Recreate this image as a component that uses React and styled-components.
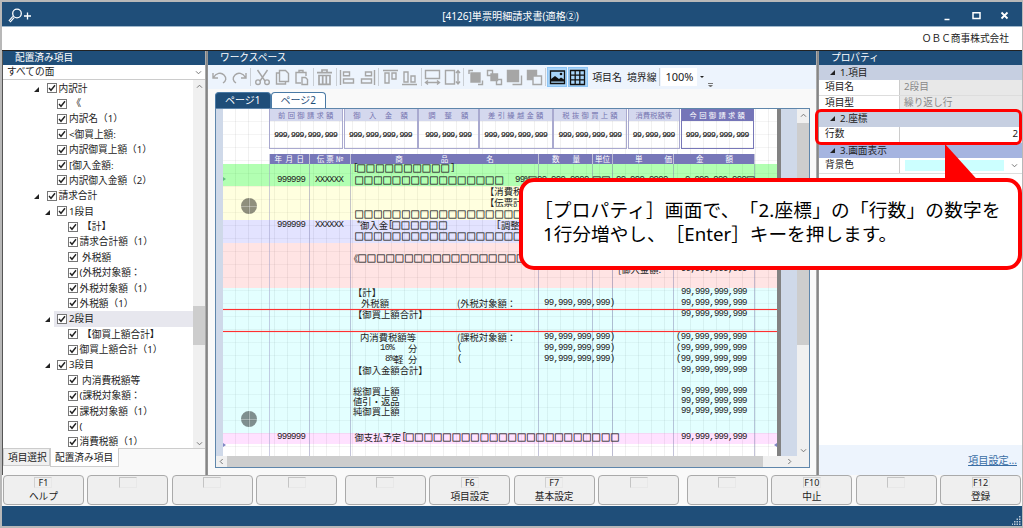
import React from "react";
import styled, { createGlobalStyle, css } from "styled-components";

const NAVY = "#1f4e79";

const treeItems = [
  { level: 1, label: "内訳計", open: true },
  { level: 2, label: " 《" },
  { level: 2, label: "内訳名（1）" },
  { level: 2, label: "<御買上額:" },
  { level: 2, label: "内訳御買上額（1）" },
  { level: 2, label: "[御入金額:" },
  { level: 2, label: "内訳御入金額（2）" },
  { level: 1, label: "請求合計", open: true },
  { level: 2, label: "1段目", open: true },
  { level: 3, label: " 【計】" },
  { level: 3, label: "請求合計額（1）" },
  { level: 3, label: " 外税額" },
  { level: 3, label: "(外税対象額：" },
  { level: 3, label: "外税対象額（1）" },
  { level: 3, label: "外税額（1）" },
  { level: 2, label: "2段目", open: true, selected: true },
  { level: 3, label: " 【御買上額合計】" },
  { level: 3, label: "御買上額合計（1）" },
  { level: 2, label: "3段目", open: true },
  { level: 3, label: " 内消費税額等" },
  { level: 3, label: "(課税対象額：" },
  { level: 3, label: "課税対象額（1）" },
  { level: 3, label: "(" },
  { level: 3, label: "消費税額（1）" },
];

const functionGroups = [
  [{ k: "F1", label: "ヘルプ" }, {}, {}, {}],
  [{}, { k: "F6", label: "項目設定" }, { k: "F7", label: "基本設定" }, {}],
  [{}, { k: "F10", label: "中止" }, {}, { k: "F12", label: "登録" }],
];

const summaryCells = [
  { label: "前回御請求額", value: "999,999,999,999", w: 75, s: 2.3 },
  { label: "御入金額", value: "999,999,999,999", w: 74.5, s: 8.5 },
  { label: "調整額", value: "999,999,999", w: 61, s: 9 },
  { label: "差引繰越金額", value: "999,999,999,999", w: 74, s: 2.3 },
  { label: "税抜御買上額", value: "999,999,999,999", w: 74.5, s: 2.3 },
  { label: "消費税額等", value: "99,999,999", w: 53, s: 0 },
  { label: "今回御請求額", value: "999,999,999,999", w: 74, s: 2.3, dark: true },
];

const columns = [
  { label: "年月日", w: 40.5, s: 3.5 },
  { label: "伝票№", w: 41, s: 2 },
  { label: "商品名", w: 188, s: 38 },
  { label: "数量", w: 54, s: 13 },
  { label: "単位", w: 20, s: 0 },
  { label: "単価", w: 61, s: 22 },
  { label: "金額", w: 81, s: 22 },
];

const bands = [
  { h: 55, color: "transparent" },
  { h: 22, color: "#00ff004d" },
  { h: 34, color: "#ffff0020" },
  { h: 22.5, color: "#0000ff1c" },
  { h: 45, color: "#ff00001b" },
  { h: 145, color: "#00ffff1c" },
  { h: 11, color: "#ff00ff1e" },
];

const boxes = (n) => "□".repeat(n);
const amount = "99,999,999,999";

// x is the left edge and y the middle line, both measured from the paper corner
const fields = [
  { x: 130, y: 59, text: `[`, mono: true },
  { x: 133.5, y: 59, text: boxes(10), box: true },
  { x: 227, y: 59, text: "]", mono: true },
  { x: 54, y: 70.5, text: "999999", mono: true },
  { x: 92, y: 70.5, text: "XXXXXX", mono: true },
  { x: 131.5, y: 70.5, text: boxes(16), box: true },
  { x: 292, y: 70.5, text: "99%", mono: true },
  { x: 305, y: 70.5, text: "□", box: true },
  { x: 314, y: 70.5, text: "99,999,9999", mono: true },
  { x: 369, y: 70.5, text: boxes(2), box: true },
  { x: 393, y: 70.5, text: "99,999,9999", mono: true },
  { x: 462, y: 70.5, text: "9,999,999,999", mono: true },
  { x: 523, y: 70.5, text: "□", box: true },
  { x: 262, y: 82, text: "【消費税" },
  { x: 262, y: 93, text: "【伝票計" },
  { x: 131.5, y: 104.5, text: boxes(19), box: true },
  { x: 54, y: 115.5, text: "999999", mono: true },
  { x: 92, y: 115.5, text: "XXXXXX", mono: true },
  { x: 133, y: 115.5, text: "*", mono: true },
  { x: 137, y: 115.5, text: "御入金" },
  { x: 165, y: 115.5, text: "[", mono: true },
  { x: 168.5, y: 115.5, text: boxes(6), box: true },
  { x: 273, y: 115.5, text: "[", mono: true },
  { x: 278, y: 115.5, text: "調整" },
  { x: 131.5, y: 127, text: boxes(19), box: true },
  { x: 126, y: 149, text: "《" },
  { x: 134.5, y: 149, text: boxes(19), box: true },
  { x: 395, y: 160, text: "[御入金額:" },
  { x: 458, y: 160, text: amount, mono: true },
  { x: 130, y: 182.5, text: "【計】" },
  { x: 458, y: 182.5, text: amount, mono: true },
  { x: 138, y: 193.5, text: "外税額" },
  { x: 234, y: 193.5, text: "(外税対象額：" },
  { x: 321, y: 193.5, text: amount + ")", mono: true },
  { x: 458, y: 193.5, text: amount, mono: true },
  { x: 130, y: 205, text: "【御買上額合計】" },
  { x: 458, y: 205, text: amount, mono: true },
  { x: 137, y: 227.5, text: "内消費税額等" },
  { x: 234, y: 227.5, text: "(課税対象額：" },
  { x: 321, y: 227.5, text: amount + ")", mono: true },
  { x: 453, y: 227.5, text: "(" + amount, mono: true },
  { x: 157, y: 238.5, text: "10%", mono: true },
  { x: 185, y: 238.5, text: "分" },
  { x: 234, y: 238.5, text: "(", mono: true },
  { x: 321, y: 238.5, text: amount + ")", mono: true },
  { x: 453, y: 238.5, text: "(" + amount, mono: true },
  { x: 162, y: 250, text: "8%", mono: true },
  { x: 171, y: 250, text: "軽" },
  { x: 185, y: 250, text: "分" },
  { x: 234, y: 250, text: "(", mono: true },
  { x: 321, y: 250, text: amount + ")", mono: true },
  { x: 453, y: 250, text: "(" + amount, mono: true },
  { x: 130, y: 261, text: "【御入金額合計】" },
  { x: 458, y: 261, text: amount, mono: true },
  { x: 130, y: 281.5, text: "総御買上額" },
  { x: 458, y: 281.5, text: amount, mono: true },
  { x: 130, y: 291.5, text: "値引・返品" },
  { x: 458, y: 291.5, text: amount, mono: true },
  { x: 130, y: 302, text: "純御買上額" },
  { x: 458, y: 302, text: amount, mono: true },
  { x: 54, y: 327.5, text: "999999", mono: true },
  { x: 131.5, y: 327.5, text: "御支払予定" },
  { x: 178.5, y: 327.5, text: "[", mono: true },
  { x: 182, y: 327.5, text: boxes(23), box: true },
  { x: 458, y: 327.5, text: amount, mono: true },
];

const toolIcons = {
  undo: <path d="M2 4v5h5M2.5 8.5C5 4 10 3 13 6s2 6-1 8" />,
  redo: <path d="M15 4v5h-5M14.5 8.5C12 4 7 3 4 6s-2 6 1 8" />,
  cut: (
    <>
      <path d="M3.5 1l7.5 11M13.5 1L6 12" />
      <circle cx="4" cy="13.2" r="2.3" />
      <circle cx="13" cy="13.2" r="2.3" />
    </>
  ),
  copy: <path d="M5.5 1.5h6l3 3v8h-9zM5.5 4H2.5v11h9v-2.500" />,
  paste: <path d="M8 14H3V3.500h10V7M6 3.500V1.500h4v2M9 8.500h3.500l2 2V15.500H9z" />,
  trash: <path d="M1 3.700h15M6 3V1h5v2M3 6.500h11v8.800H3zM6.700 7v8M10.300 7v8" strokeWidth="1.7" />,
  left: <path d="M1.500 1v15M4.500 3h6v3.800h-6zM4.500 10h10v4h-10z" />,
  right: <path d="M15.500 1v15M6.500 3h6v3.800h-6zM2.500 10h10v4h-10z" />,
  top: <path d="M1 1.500h15M3 4h4v10H3zM10 4h4v6h-4z" />,
  bottom: <path d="M1 15.500h15M3 3h4v10H3zM10 7h4v6h-4z" />,
  width: <path d="M1.500 1.500h14v8h-14zM1.500 13.500h14M4 11.500l-2.500 2 2.500 2M13 11.500l2.500 2-2.500 2" />,
  height: <path d="M1.500 1.500h9v13.500h-9zM14 1.500V15M12 4l2-2.500L16 4M12 12.500l2 2.500 2-2.500" />,
  front: (
    <>
      <path d="M2 5V1.500h4M11 15.500h4.500v-4" />
      <path d="M4 4h9v9H4z" fill="#a6a6a6" />
    </>
  ),
  forward: (
    <>
      <path d="M1.500 1.500h5v5h-5zM10.500 10.500h5v5h-5z" />
      <path d="M5 5h6.500v6.500H5z" fill="#a6a6a6" />
    </>
  ),
  back: (
    <>
      <path d="M15.500 6.500v9h-9" />
      <path d="M1.500 1.500h11v11h-11z" fill="#a6a6a6" />
    </>
  ),
  backward: (
    <>
      <path d="M1.500 1.500h9v9h-9z" fill="#a6a6a6" />
      <path d="M7 7h8.500v8.500H7z" fill="#edf4fd" />
    </>
  ),
};

function ToolIcon({ name }) {
  return (
    <ToolButton>
      <svg width="17" height="17" viewBox="0 0 17 17" fill="none" stroke="#a6a6a6" strokeWidth="1.4">
        {toolIcons[name]}
      </svg>
    </ToolButton>
  );
}

function Chevron({ dir = "down" }) {
  const turn = { down: 0, up: 180, left: 90, right: 270 }[dir];
  return (
    <svg width="7" height="7" viewBox="0 0 7 7" fill="none" stroke="#777" strokeWidth="1">
      <path d="M1 2.300l2.500 2.500L6 2.300" transform={`rotate(${turn} 3.500 3.500)`} />
    </svg>
  );
}

function Triangle() {
  return (
    <svg width="5" height="5" viewBox="0 0 5 5">
      <path d="M5 0v5H0z" fill="#222" />
    </svg>
  );
}

function Tree() {
  return (
    <TreeArea>
      <TreeList>
        {treeItems.map((item, i) => (
          <TreeRow key={i} $level={item.level}>
            <TreeArrow>{item.open && <Triangle />}</TreeArrow>
            <TreeBody $selected={item.selected}>
              <Check>
                <svg width="8" height="8" viewBox="0 0 8 8" fill="none" stroke="#222" strokeWidth="1.4">
                  <path d="M1 4l2 2.300L7 1.300" />
                </svg>
              </Check>
              {item.label}
            </TreeBody>
          </TreeRow>
        ))}
      </TreeList>
      <TreeScroll>
        <Chevron dir="up" />
        <TreeThumb />
        <Chevron />
      </TreeScroll>
    </TreeArea>
  );
}

function Toolbar() {
  return (
    <ToolbarWrap>
      <ToolIcon name="undo" />
      <ToolIcon name="redo" />
      <Separator />
      <ToolIcon name="cut" />
      <ToolIcon name="copy" />
      <ToolIcon name="paste" />
      <Separator />
      <ToolIcon name="trash" />
      <Separator />
      <ToolIcon name="left" />
      <ToolIcon name="right" />
      <Separator />
      <ToolIcon name="top" />
      <ToolIcon name="bottom" />
      <Separator />
      <ToolIcon name="width" />
      <ToolIcon name="height" />
      <Separator />
      <ToolIcon name="front" />
      <ToolIcon name="forward" />
      <ToolIcon name="back" />
      <ToolIcon name="backward" />
      <Separator />
      <ToolButton $active>
        <svg width="17" height="17" viewBox="0 0 17 17">
          <path d="M1.500 2h14v12.500h-14z" fill="none" stroke="#111" strokeWidth="1.300" />
          <path d="M2 12.500V10l4-3 4 3 2-1.500 3 2v2z" fill="#111" />
          <circle cx="12" cy="5" r="1.300" fill="#111" />
        </svg>
      </ToolButton>
      <ToolButton $active>
        <svg width="17" height="17" viewBox="0 0 17 17" fill="none" stroke="#111" strokeWidth="1.300">
          <path d="M1.500 1.500h14v14h-14zM6.200 1.500v14M10.800 1.500v14M1.500 6.200h14M1.500 10.800h14" />
        </svg>
      </ToolButton>
      <ToolText>項目名</ToolText>
      <ToolText>境界線</ToolText>
      <Separator />
      <Zoom>100%</Zoom>
      <Caret />
      <Overflow />
    </ToolbarWrap>
  );
}

function Paper() {
  return (
    <PaperSheet>
      <Bands>
        {bands.map((b, i) => (
          <Band key={i} $h={b.h} $color={b.color} />
        ))}
      </Bands>
      <Summary>
        {summaryCells.map((c) => (
          <SummaryCell key={c.label} $w={c.w} $dark={c.dark}>
            <SummaryHead $dark={c.dark} $s={c.s}>{c.label}</SummaryHead>
            <SummaryValue>{c.value}</SummaryValue>
          </SummaryCell>
        ))}
      </Summary>
      <Columns>
        {columns.map((c) => (
          <Column key={c.label} $w={c.w}>
            <ColumnHead $s={c.s}>{c.label}</ColumnHead>
          </Column>
        ))}
      </Columns>
      {fields.map((f, i) => (
        <Field key={i} $x={f.x} $y={f.y} $mono={f.mono} $box={f.box}>{f.text}</Field>
      ))}
      <Boundary $y={200} />
      <Boundary $y={222} />
      <Punch $y={97} />
      <Punch $y={310} />
      <Marker $y={70} $color="#5fbf7f" />
      <Marker $y={336} $color="#7f86c4" />
      <Marker $y={336} $color="#7f86c4" $right />
    </PaperSheet>
  );
}

function Workspace() {
  return (
    <WorkspacePanel>
      <PanelTitle>ワークスペース</PanelTitle>
      <Toolbar />
      <Pages>
        <PageTab $active>ページ1</PageTab>
        <PageTab>ページ2</PageTab>
      </Pages>
      <Viewport>
        <ViewportMain>
          <Desk>
            <Paper />
          </Desk>
          <VScroll>
            <Chevron dir="up" />
            <VThumb />
            <Chevron />
          </VScroll>
        </ViewportMain>
        <HScroll>
          <ScrollEnd><Chevron dir="left" /></ScrollEnd>
          <HThumb />
          <ScrollEnd $wide><Chevron dir="right" /></ScrollEnd>
        </HScroll>
      </Viewport>
    </WorkspacePanel>
  );
}

function Properties() {
  return (
    <PropertyPanel>
      <PanelTitle>プロパティ</PanelTitle>
      <Category $h={15}><Triangle />1.項目</Category>
      <Property $h={15.5}>
        <PropName>項目名</PropName>
        <PropValue $readOnly>2段目</PropValue>
      </Property>
      <Property $h={15}>
        <PropName>項目型</PropName>
        <PropValue $readOnly>繰り返し行</PropValue>
      </Property>
      <Category $h={16}><Triangle />2.座標</Category>
      <Property $h={16.5}>
        <PropName>行数</PropName>
        <PropValue $right>2</PropValue>
      </Property>
      <Category $h={15} $selected><Triangle />3.画面表示</Category>
      <Property $h={16}>
        <PropName>背景色</PropName>
        <PropValue>
          <Swatch />
          <Chevron />
        </PropValue>
      </Property>
      <PropertyFoot>
        <SettingLink>項目設定...</SettingLink>
      </PropertyFoot>
    </PropertyPanel>
  );
}

export default function App() {
  return (
    <>
      <GlobalStyle />
      <Window>
        <TitleBar>
          <svg width="27" height="16" viewBox="0 0 27 16" fill="none" stroke="#fff" strokeWidth="1.300">
            <circle cx="9" cy="5.500" r="4.300" />
            <path d="M5.500 9L1.500 13.500" strokeWidth="2.800" />
            <path d="M5.500 9L1.800 13.200" stroke={NAVY} strokeWidth="0.800" />
            <path d="M16 8h7M19.500 4.500v7" />
          </svg>
          <Title>[4126]単票明細請求書(適格②)</Title>
          <svg width="66" height="10" viewBox="0 0 66 10" fill="none" stroke="#fff" strokeWidth="1.500">
            <path d="M0.500 8.500h5M29 1.700h7v5.800h-7z" />
            <path d="M57.500 1.500l6 6M63.500 1.500l-6 6" strokeWidth="1.800" />
          </svg>
        </TitleBar>
        <Company>ＯＢＣ商事株式会社</Company>
        <Main>
          <ItemPanel>
            <PanelTitle>配置済み項目</PanelTitle>
            <FaceSelect>
              すべての面
              <Chevron />
            </FaceSelect>
            <Tree />
            <BottomTabs>
              <BottomTab $w={47}>項目選択</BottomTab>
              <BottomTab $w={69} $active>配置済み項目</BottomTab>
            </BottomTabs>
          </ItemPanel>
          <Splitter />
          <Workspace />
          <Splitter />
          <Properties />
        </Main>
        <FunctionBar>
          {functionGroups.map((group, i) => (
            <FunctionGroup key={i}>
              {group.map((f, j) => (
                <FunctionButton key={j}>
                  <KeyCap $empty={!f.k}>{f.k}</KeyCap>
                  {f.label}
                </FunctionButton>
              ))}
            </FunctionGroup>
          ))}
        </FunctionBar>
        <StatusBar>
          <svg width="9" height="9" viewBox="0 0 9 9" fill="#b9c8d8">
            <path d="M7 0h1.500v1.500H7zM7 2.500h1.500V4H7zM7 5h1.500v1.500H7zM7 7.500h1.500V9H7zM4.500 2.500H6V4H4.500zM4.500 5H6v1.500H4.500zM4.500 7.500H6V9H4.500zM2 5h1.500v1.500H2zM2 7.500h1.500V9H2zM0 7.500h1V9H0z" />
          </svg>
        </StatusBar>
        <Highlight />
        <Callout>
          <CalloutText>
            <CalloutLine $hang>［プロパティ］画面で、「2.座標」の「行数」の数字を</CalloutLine>
            <CalloutLine>1行分増やし、［Enter］キーを押します。</CalloutLine>
          </CalloutText>
        </Callout>
        <Pointer width="36" height="38" viewBox="0 0 36 38">
          <path d="M1 0L34 36.500H1z" fill="#f00" />
        </Pointer>
      </Window>
    </>
  );
}

const GlobalStyle = createGlobalStyle`
  * {
    box-sizing: border-box;
  }
  body {
    margin: 0;
    overflow: hidden;
    font-family: "Noto Sans", "Noto Sans CJK JP", sans-serif;
    font-size: 9.7px;
    color: #222;
    text-spacing-trim: space-all;
  }
  svg {
    display: block;
    flex: none;
  }
`;

const Window = styled.div`
  position: relative;
  width: 1023px;
  height: 528px;
  display: flex;
  flex-direction: column;
  background: #fff;
  border: 2px solid #b8b8b8;
  border-right-width: 1px;
  white-space: pre;
`;

const TitleBar = styled.header`
  display: flex;
  align-items: center;
  justify-content: space-between;
  height: 24px;
  flex: none;
  padding: 3px 12px 0 6px;
  background: ${NAVY};
  color: #fff;
`;

const Title = styled.div`
  font-size: 10.1px;
  line-height: 14px;
  margin-left: 42px;
`;

const Company = styled.div`
  height: 25px;
  flex: none;
  padding: 0 13px;
  text-align: right;
  line-height: 24px;
  border-top: 1px solid #9fb8cc;
  border-bottom: 1px solid #222;
`;

const Main = styled.main`
  display: flex;
  flex: none;
  height: 424px;
  background: #f9f9f9;
`;

const Splitter = styled.div`
  width: 3px;
  background: linear-gradient(90deg, #c8c8c8, #828282 40%, #999);
`;

const PanelTitle = styled.h2`
  margin: 0;
  height: 14px;
  flex: none;
  padding-left: 12px;
  background: ${NAVY};
  color: #fff;
  font-size: 9.7px;
  font-weight: 400;
  line-height: 13px;
`;

const ItemPanel = styled.section`
  display: flex;
  flex-direction: column;
  width: 203px;
  border-left: 1px solid #555;
`;

const FaceSelect = styled.div`
  display: flex;
  align-items: center;
  justify-content: space-between;
  height: 15px;
  padding: 0 3px 0 4px;
  background: #fff;
  border-bottom: 1px solid #ccc;
  line-height: 14px;
`;

const TreeArea = styled.div`
  display: flex;
  height: 369px;
  background: #fff;
  border-bottom: 1px solid #ccc;
`;

const TreeList = styled.div`
  flex: 1;
  padding-top: 0.5px;
`;

const TreeRow = styled.div`
  display: flex;
  height: 15.39px;
  padding-left: ${(p) => 31 + (p.$level - 1) * 10.5}px;
`;

const TreeArrow = styled.span`
  width: 5px;
  margin-right: 4px;
  padding-top: 6px;
`;

const TreeBody = styled.div`
  display: flex;
  align-items: center;
  flex: 1;
  padding-left: 3.5px;
  line-height: 15px;
  background: ${(p) => (p.$selected ? "#e7e7ee" : "transparent")};
`;

const Check = styled.span`
  display: flex;
  align-items: center;
  justify-content: center;
  width: 10px;
  height: 10px;
  margin-right: 2px;
  border: 1px solid #777;
  background: #fff;
`;

const TreeScroll = styled.div`
  display: flex;
  flex-direction: column;
  align-items: center;
  justify-content: space-between;
  width: 12px;
  padding: 3px 0 1px;
  background: #f0f0f0;
`;

const TreeThumb = styled.div`
  width: 12px;
  height: 39px;
  margin-top: 120px;
  background: #cdcdcd;
`;

const BottomTabs = styled.div`
  display: flex;
`;

const BottomTab = styled.div`
  width: ${(p) => p.$w}px;
  height: ${(p) => (p.$active ? 19 : 17)}px;
  padding-left: 4px;
  line-height: ${(p) => (p.$active ? 19 : 17)}px;
  background: ${(p) => (p.$active ? "#fff" : "#f0f0f0")};
  border: 1px solid #ccc;
  border-top: 0;
  margin-top: ${(p) => (p.$active ? -1 : 0)}px;
`;

const WorkspacePanel = styled.section`
  display: flex;
  flex-direction: column;
  width: 608px;
`;

const ToolbarWrap = styled.div`
  display: flex;
  align-items: center;
  height: 24px;
  padding-left: 2px;
  background: #edf4fd;
`;

const ToolButton = styled.span`
  display: flex;
  align-items: center;
  justify-content: center;
  width: 19.7px;
  height: 20px;
  margin-right: ${(p) => (p.$active ? 1 : 0)}px;
  background: ${(p) => (p.$active ? "#a8d4f8" : "transparent")};
  border: ${(p) => (p.$active ? "1px solid #8cc4f4" : "0")};
`;

const Separator = styled.i`
  width: 1px;
  height: 18px;
  margin: 0 1.1px;
  background: #c9ced4;
`;

const ToolText = styled.span`
  width: 34.8px;
  padding-left: 3.5px;
  font-size: 9.9px;
`;

const Zoom = styled.span`
  width: 36px;
  height: 18px;
  padding-left: 4px;
  line-height: 17px;
  font-size: 11px;
  background: #fff;
`;

const Caret = styled.i`
  margin: 0 4px 0 3px;
  border: 2.5px solid transparent;
  border-top-color: #222;
  border-bottom: 0;
`;

const Overflow = styled.i`
  width: 5px;
  height: 4px;
  margin-top: 15px;
  border-top: 1px solid #777;

  &::after {
    content: "";
    display: block;
    margin-top: 1px;
    border: 2px solid transparent;
    border-top-color: #777;
    border-bottom: 0;
  }
`;

const Pages = styled.div`
  display: flex;
  height: 19px;
  padding: 3px 0 0 7px;
`;

const PageTab = styled.div`
  width: 55.5px;
  height: 16px;
  text-align: center;
  line-height: 15px;
  font-size: 10px;
  border: 1px solid #4a7aa5;
  border-bottom: 0;
  border-radius: 4px 4px 0 0;
  background: ${(p) => (p.$active ? NAVY : "#fff")};
  color: ${(p) => (p.$active ? "#fff" : NAVY)};
`;

const Viewport = styled.div`
  display: flex;
  flex-direction: column;
  width: 595px;
  height: 360px;
  margin-left: 7px;
  border: 1px solid #5f86ab;
`;

const ViewportMain = styled.div`
  display: flex;
  height: 347px;
`;

const Desk = styled.div`
  display: flex;
  flex: 1;
  padding-left: 7px;
  background: #cfd9e9;
`;

const VScroll = styled.div`
  display: flex;
  flex-direction: column;
  align-items: center;
  justify-content: space-between;
  width: 12px;
  padding: 3px 0 2px;
  background: #f0f0f0;
`;

const VThumb = styled.div`
  width: 12px;
  height: 222px;
  margin-bottom: 98px;
  background: #cdcdcd;
`;

const HScroll = styled.div`
  display: flex;
  height: 11px;
  background: #f0f0f0;
`;

const ScrollEnd = styled.span`
  display: flex;
  align-items: center;
  justify-content: ${(p) => (p.$wide ? "flex-end" : "center")};
  width: ${(p) => (p.$wide ? 34 : 11)}px;
  padding-right: ${(p) => (p.$wide ? 4 : 0)}px;
`;

const HThumb = styled.div`
  width: 536px;
  background: #cdcdcd;
`;

const PaperSheet = styled.div`
  position: relative;
  width: 558px;
  height: 347px;
  overflow: hidden;
  border-right: 4px solid #828282;
  background:
    repeating-linear-gradient(90deg, transparent 0 12px, #64646418 12px 13px),
    repeating-linear-gradient(180deg, transparent 0 12px, #64646412 12px 13px),
    #fff;
`;

const Bands = styled.div`
  position: absolute;
  inset: 0;
`;

const Band = styled.div`
  height: ${(p) => p.$h}px;
  background: ${(p) => p.$color};
`;

const Summary = styled.div`
  position: absolute;
  left: 45.5px;
  top: 0;
  display: flex;
  font-family: "Noto Sans CJK JP", sans-serif;
`;

const SummaryCell = styled.div`
  width: ${(p) => p.$w - 0.5}px;
  margin-right: 0.5px;
  height: 40px;
  border: 1px solid ${(p) => (p.$dark ? "#7777b8" : "#a9a9cf")};
  border-top: 0;
`;

const SummaryHead = styled.div`
  height: 12px;
  line-height: 12px;
  font-size: 7.3px;
  text-align: center;
  letter-spacing: ${(p) => p.$s}px;
  text-indent: ${(p) => p.$s}px;
  color: ${(p) => (p.$dark ? "#fff" : "#7474b0")};
  background: ${(p) => (p.$dark ? "#7575b8" : "#d4d8ee")};
`;

const SummaryValue = styled.div`
  padding-top: 8px;
  line-height: 12px;
  text-align: center;
  font-family: "Liberation Mono", monospace;
  font-size: 8px;
  letter-spacing: -0.6px;
  color: #222;
  -webkit-text-stroke: 0.2px #222;
`;

const Columns = styled.div`
  position: absolute;
  left: 45.5px;
  top: 45px;
  bottom: 0;
  display: flex;
  border-left: 1px solid #9c9cc880;
`;

const Column = styled.div`
  width: ${(p) => p.$w}px;
  border-right: 1.5px solid #7878a870;
`;

const ColumnHead = styled.div`
  height: 10px;
  line-height: 10px;
  text-align: center;
  font-family: "Noto Sans CJK JP", sans-serif;
  font-size: 7.5px;
  letter-spacing: ${(p) => p.$s}px;
  text-indent: ${(p) => p.$s}px;
  color: #fff;
  background: #7777b8;
`;

const Field = styled.span`
  position: absolute;
  left: ${(p) => p.$x}px;
  top: ${(p) => p.$y - 5}px;
  line-height: 10px;
  font-family: "Noto Sans CJK JP", sans-serif;
  font-size: 9.33px;
  ${(p) =>
    p.$mono &&
    css`
      font-family: "Liberation Mono", monospace;
      font-size: 9px;
      letter-spacing: -0.7px;
    `}
  ${(p) =>
    p.$box &&
    css`
      -webkit-text-stroke: 0.3px #333;
    `}
`;

const Boundary = styled.div`
  position: absolute;
  left: 0;
  right: 0;
  top: ${(p) => p.$y}px;
  height: 1px;
  background: #ff3030;
  box-shadow: 0 0 1px #ff6060;
`;

const Punch = styled.i`
  position: absolute;
  left: 18px;
  top: ${(p) => p.$y - 8}px;
  width: 16px;
  height: 16px;
  border-radius: 50%;
  background:
    linear-gradient(#ffffff50, #ffffff50) 50% 0 / 1px 100% no-repeat,
    linear-gradient(#ffffff50, #ffffff50) 0 50% / 100% 1px no-repeat,
    #00000070;
`;

const Marker = styled.i`
  position: absolute;
  top: ${(p) => p.$y - 2}px;
  ${(p) => (p.$right ? "right: 0;" : "left: 0;")}
  border: 2.5px solid transparent;
  border-${(p) => (p.$right ? "right" : "left")}: 3px solid ${(p) => p.$color};
  border-${(p) => (p.$right ? "left" : "right")}: 0;
`;

const PropertyPanel = styled.section`
  display: flex;
  flex-direction: column;
  flex: 1;
  background: #fff;
`;

const Category = styled.div`
  display: flex;
  align-items: center;
  gap: 5px;
  height: ${(p) => p.$h}px;
  padding-left: 11px;
  line-height: 14px;
  background: ${(p) => (p.$selected ? "#a5b4e0" : "#c6cfe1")};
`;

const Property = styled.div`
  display: flex;
  height: ${(p) => p.$h}px;
  line-height: 14px;
  border-bottom: 1px solid #ddd;
`;

const PropName = styled.div`
  width: 81px;
  padding-left: 6px;
  border-right: 1px solid #ccc;
`;

const PropValue = styled.div`
  display: flex;
  align-items: center;
  flex: 1;
  padding: 0 4px;
  justify-content: ${(p) => (p.$right ? "flex-end" : "space-between")};
  color: ${(p) => (p.$readOnly ? "#888" : "#222")};
  background: ${(p) => (p.$readOnly ? "#e8e8e8" : "#fff")};
`;

const Swatch = styled.span`
  width: 99px;
  height: 11px;
  margin-left: 1px;
  background: #ccffff;
`;

const PropertyFoot = styled.div`
  height: 30px;
  margin-top: auto;
  padding: 8px 5px;
  text-align: right;
  line-height: 15px;
  background: #edf4fd;
`;

const SettingLink = styled.a`
  color: #3a6ea5;
  font-size: 10.2px;
  text-decoration: underline;
`;

const FunctionBar = styled.div`
  display: flex;
  gap: 8px;
  height: 31px;
  flex: none;
  padding: 0 1px;
  background: #f9f9f9;
`;

const FunctionGroup = styled.div`
  display: flex;
  flex: 1;
  gap: 3.5px;
`;

const FunctionButton = styled.button`
  display: flex;
  flex-direction: column;
  align-items: center;
  flex: 1;
  height: 30px;
  padding: 1px 0 0;
  border: 1.5px solid #aaa;
  border-radius: 4px;
  background: #efefef;
  color: #222;
  font: inherit;
  line-height: 15px;
`;

const KeyCap = styled.span`
  width: 18px;
  height: 11px;
  margin-bottom: 1px;
  text-align: center;
  font-size: 9px;
  line-height: 9px;
  border: 1px solid ${(p) => (p.$empty ? "#c4c4c4" : "#d0d0d0")};
  border-right-color: #e8e8e8;
  border-bottom-color: #e8e8e8;
`;

const StatusBar = styled.footer`
  display: flex;
  flex: 1;
  align-items: flex-end;
  justify-content: flex-end;
  padding: 1px;
  background: ${NAVY};
`;

const Highlight = styled.div`
  position: absolute;
  left: 813px;
  top: 107px;
  width: 207px;
  height: 36px;
  border: 3px solid #f00;
  border-radius: 6px;
`;

const Callout = styled.div`
  position: absolute;
  left: 517px;
  top: 176px;
  width: 503px;
  height: 92px;
  padding: 16px 0 0 20px;
  border: 4px solid #f00;
  border-radius: 15px;
  background: #fff;
`;

const CalloutText = styled.p`
  margin: 0;
  font-size: 18.67px;
  line-height: 23.5px;
  color: #000;
`;

const CalloutLine = styled.span`
  display: block;
  margin-left: ${(p) => (p.$hang ? -9 : 0)}px;
  letter-spacing: ${(p) => (p.$hang ? 0.2 : 0)}px;
`;

const Pointer = styled.svg`
  position: absolute;
  left: 942px;
  top: 142px;
`;
